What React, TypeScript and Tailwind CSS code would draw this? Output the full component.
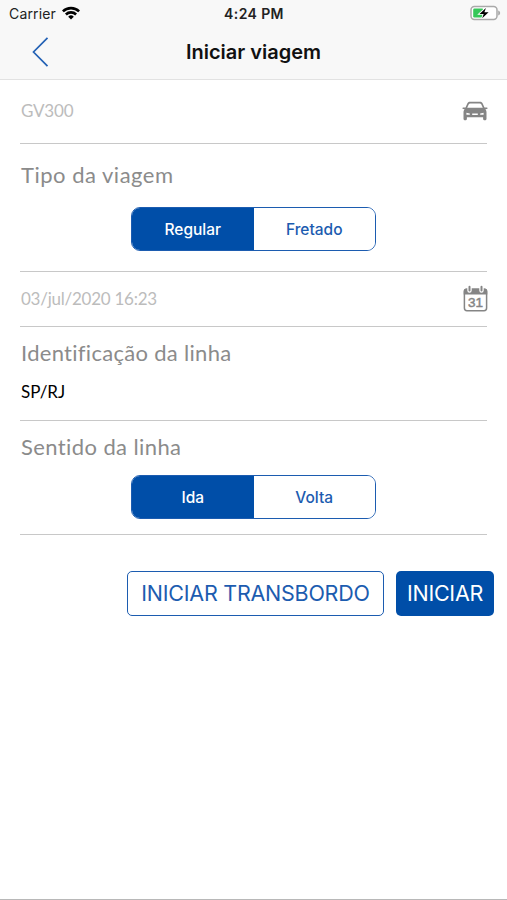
import { useState } from 'react';

function WifiIcon() {
  return (
    <svg width="18" height="14" viewBox="0 0 18 14" fill="none" stroke="#000" strokeWidth="2.6">
      <path d="M0.9 5.4a11.6 11.6 0 0 1 16.2 0" />
      <path d="M3.9 8.5a7.3 7.3 0 0 1 10.2 0" />
      <path d="M9 13.6l-2.8-2.9a4 4 0 0 1 5.6 0z" fill="#000" stroke="none" />
    </svg>
  );
}

function BatteryIcon() {
  return (
    <svg width="31" height="16" viewBox="0 0 31 16">
      <rect x="1" y="1.5" width="26" height="13" rx="3.4" fill="#fff" stroke="#a9a9a9" strokeWidth="1.5" />
      <path d="M28.2 5.4c2.6 0.8 2.6 4.2 0 5z" fill="#a9a9a9" />
      <rect x="3.2" y="3.6" width="10" height="8.800" rx="1.2" fill="#35c759" />
      <path d="M15.9 3l-6.400 5.900h4.200l-1.500 4.300 6.400-5.900h-4.200z" fill="#000" stroke="#fff" strokeWidth="1.8" paintOrder="stroke" />
    </svg>
  );
}

function CarIcon() {
  return (
    <svg width="26" height="20" viewBox="0 0 26 20" fill="#858585">
      <path
        fillRule="evenodd"
        d="M8 0.800h10c1.400 0 2.200 0.600 2.700 1.800l1.800 3.800h2.400c0.900 0 0.900 1.500 0 1.600l-1.500 0.200c0.800 0.900 1.100 1.800 1.100 3V17.800c0 2-3.400 2-3.400 0v-1.600H4.900v1.600c0 2-3.400 2-3.400 0v-6.600c0-1.200 0.300-2.100 1.100-3L1.100 8c-0.900-0.100-0.900-1.600 0-1.600h2.400l1.800-3.800C5.800 1.400 6.600 0.800 8 0.800zM8.200 2.400c-0.700 0-1.100 0.300-1.400 0.900L5.200 6.800h15.600l-1.600-3.500c-0.300-0.600-0.700-0.900-1.400-0.900zM4.400 11.800v2h3.400v-1.300zM21.600 11.800v2h-3.400v-1.300zM10.200 12.400v1.500h5.600v-1.500z"
      />
    </svg>
  );
}

function CalendarIcon() {
  return (
    <svg width="25" height="27" viewBox="0 0 25 27">
      <rect x="1.400" y="4.200" width="22.200" height="21.500" rx="2.600" fill="#fff" stroke="#858585" strokeWidth="1.500" />
      <path d="M0.700 9.600V6a2.600 2.600 0 0 1 2.600-2.600h18.400A2.600 2.600 0 0 1 24.300 6v3.600z" fill="#858585" />
      <path d="M6.500 2.200v3.400M18.500 2.200v3.400" stroke="#fff" strokeWidth="4.400" strokeLinecap="round" />
      <path d="M6.500 1.700v3.700M18.500 1.700v3.700" stroke="#858585" strokeWidth="2" strokeLinecap="round" />
      <text x="12.500" y="21.800" textAnchor="middle" fontSize="13.500" fill="#858585" stroke="#858585" strokeWidth="0.500" className="font-['Liberation_Sans',sans-serif]">31</text>
    </svg>
  );
}

type SegmentedProps = {
  options: string[];
};

function Segmented({ options }: SegmentedProps) {
  const [selected, setSelected] = useState(options[0]);

  return (
    <div className="mx-auto flex h-11 w-[245px] overflow-hidden rounded-[9px] border border-[#1c5cb0] font-['Inter',sans-serif] text-[15.5px] font-medium">
      {options.map((option) => (
        <button
          key={option}
          onClick={() => setSelected(option)}
          className={option === selected ? 'flex-1 bg-[#004ea8] pt-0.5 text-white' : 'flex-1 bg-white pt-0.5 text-[#1c5cb0]'}
        >
          {option}
        </button>
      ))}
    </div>
  );
}

function App() {
  return (
    <div className="flex h-[900px] w-[507px] flex-col border-b border-[#b8b8b8] bg-white font-['Lato',sans-serif]">
      <header className="h-20 border-b border-[#e2e2e2] bg-[#f8f8f8] font-['Inter',sans-serif]">
        <div className="grid h-[26px] grid-cols-3 items-center pr-[6px] pl-[9px] text-[14px] text-[#222]">
          <div className="flex items-center gap-[6px]">
            <span className="tracking-[0.15px]">Carrier</span>
            <WifiIcon />
          </div>
          <span className="-ml-[2px] text-center font-semibold tracking-[0.4px]">4:24 PM</span>
          <div className="flex justify-end">
            <BatteryIcon />
          </div>
        </div>
        <div className="grid h-[52px] grid-cols-[60px_1fr_60px] items-center">
          <button className="pl-8">
            <svg width="18" height="32" viewBox="0 0 18 32" fill="none" stroke="#2462b5" strokeWidth="1.7">
              <path d="M15.500 1.800L1.500 16l14 14.200" />
            </svg>
          </button>
          <h1 className="text-center text-[20px] font-semibold text-[#111]">Iniciar viagem</h1>
        </div>
      </header>

      <main className="px-5">
        <div className="flex h-16 items-center justify-between border-b border-[#c8c8c8] pb-[2px]">
          <span className="pl-px text-[17px] tracking-[-0.2px] text-[#bcbcbc]">GV300</span>
          <div className="-mr-px">
            <CarIcon />
          </div>
        </div>

        <div className="h-32 border-b border-[#c8c8c8] pt-[15px]">
          <h2 className="mb-4 pl-px text-[22px] leading-8 tracking-[0.5px] text-[#8b8b8b]">Tipo da viagem</h2>
          <Segmented options={['Regular', 'Fretado']} />
        </div>

        <div className="flex h-[55px] items-center justify-between border-b border-[#c8c8c8]">
          <span className="pl-px text-[17px] tracking-[-0.25px] text-[#bcbcbc]">03/jul/2020 16:23</span>
          <div className="-mr-px pb-[2px]">
            <CalendarIcon />
          </div>
        </div>

        <div className="h-[94px] border-b border-[#c8c8c8] pt-[10px]">
          <h2 className="pl-px text-[22px] leading-8 tracking-[0.3px] text-[#8b8b8b]">Identificação da linha</h2>
          <p className="mt-[11px] pl-px text-[17px] leading-6 text-black">SP/RJ</p>
        </div>

        <div className="h-[114px] border-b border-[#c8c8c8] pt-[10px]">
          <h2 className="mb-3 pl-px text-[22px] leading-8 tracking-[0.400px] text-[#8b8b8b]">Sentido da linha</h2>
          <Segmented options={['Ida', 'Volta']} />
        </div>
      </main>

      <div className="mt-9 flex justify-end gap-3 pr-[13px] font-['Inter',sans-serif] text-[21.500px] tracking-[-0.25px] whitespace-nowrap">
        <button className="h-[45px] w-[257px] rounded-[5px] border border-[#1c5cb0] text-[#1c5cb0]">INICIAR TRANSBORDO</button>
        <button className="h-[45px] w-[98px] rounded-[5px] bg-[#004ea8] text-white">INICIAR</button>
      </div>
    </div>
  );
}

export default App
